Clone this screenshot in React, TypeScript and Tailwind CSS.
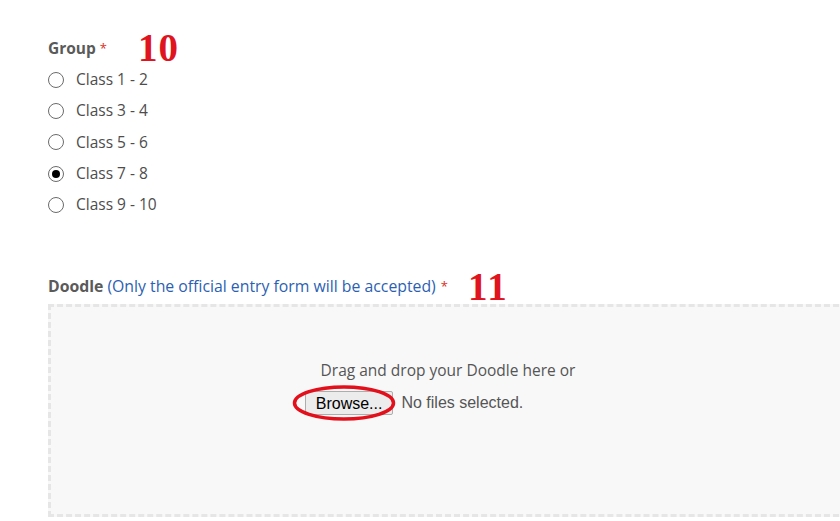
import React from "react";

const options = ["Class 1 - 2", "Class 3 - 4", "Class 5 - 6", "Class 7 - 8", "Class 9 - 10"];

export default function App() {
  return (
    <div className="w-[840px] h-[521px] overflow-hidden bg-white pl-[48px] pt-[38px]" style={{ fontFamily: "'Open Sans', 'Liberation Sans', sans-serif" }}>
      <div className="flex items-center h-[22px]">
        <span className="text-[15.5px] font-bold text-[#5a5a5a]">Group</span>
        <span className="text-[13px] text-[#d93025] ml-[4px]">*</span>
        <span className="ml-[31px] mt-[-3px] text-[39px] font-bold text-[#e0141e] leading-none tracking-[1px]" style={{ fontFamily: "'Liberation Serif', serif" }}>10</span>
      </div>
      <div className="mt-[4px] flex flex-col">
        {options.map((o, i) => (
          <div key={o} className="flex items-center h-[31.3px]">
            <div className="w-[16px] h-[16px] rounded-full border-[1.5px] border-[#6b6b6b] flex items-center justify-center">
              {i === 3 && <div className="w-[8px] h-[8px] rounded-full bg-black" />}
            </div>
            <span className="ml-[12px] text-[15.5px] text-[#4d4d4d]">{o}</span>
          </div>
        ))}
      </div>
      <div className="mt-[55px] flex items-center h-[22px]">
        <span className="text-[15.8px] font-bold text-[#5a5a5a]">Doodle</span>
        <span className="text-[15.8px] text-[#2c5fb3] ml-[4px]">(Only the official entry form will be accepted)</span>
        <span className="text-[13px] text-[#d93025] ml-[5px]">*</span>
        <span className="ml-[20px] text-[39px] font-bold text-[#e0141e] leading-none tracking-[2px]" style={{ fontFamily: "'Liberation Serif', serif" }}>11</span>
      </div>
      <div className="mt-[7px] w-[800px] h-[213px] bg-[#f8f8f8] border-[3px] border-dashed border-[#e6e6e6] flex flex-col items-center pt-[52px]">
        <div className="text-[15.5px] text-[#555]">Drag and drop your Doodle here or</div>
        <div className="mt-[8px] mr-[68px] flex items-center" style={{ fontFamily: "'Liberation Sans', Arial, sans-serif" }}>
          <div className="relative">
            <button className="h-[24px] px-[10px] text-[16px] text-black bg-[#ececec] border border-[#adadad] rounded-[2px]">Browse...</button>
            <svg className="absolute left-[-13px] top-[-6px] pointer-events-none" width="104" height="36" viewBox="0 0 104 36">
              <ellipse cx="52" cy="18" rx="49.5" ry="16" fill="none" stroke="#e3101c" strokeWidth="3.5" />
            </svg>
          </div>
          <span className="ml-[8px] text-[16px] text-[#555]">No files selected.</span>
        </div>
      </div>
    </div>
  );
}
